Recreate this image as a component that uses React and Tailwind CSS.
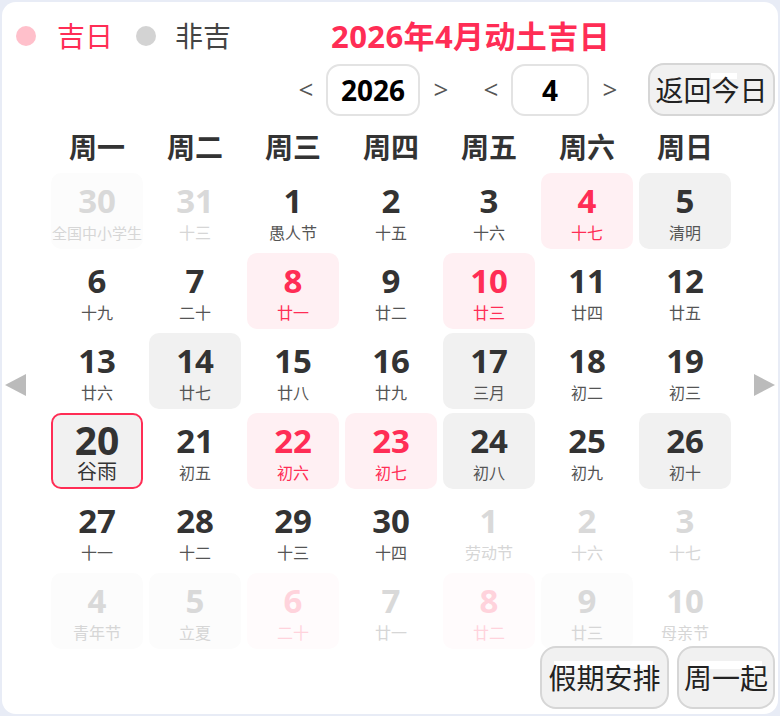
const days = [
  { d: "30", l: "全国中小学生", t: "other", box: "gray", small: true },
  { d: "31", l: "十三", t: "other" },
  { d: "1", l: "愚人节" },
  { d: "2", l: "十五" },
  { d: "3", l: "十六" },
  { d: "4", l: "十七", box: "lucky" },
  { d: "5", l: "清明", box: "gray" },

  { d: "6", l: "十九" },
  { d: "7", l: "二十" },
  { d: "8", l: "廿一", box: "lucky" },
  { d: "9", l: "廿二" },
  { d: "10", l: "廿三", box: "lucky" },
  { d: "11", l: "廿四" },
  { d: "12", l: "廿五" },

  { d: "13", l: "廿六" },
  { d: "14", l: "廿七", box: "gray" },
  { d: "15", l: "廿八" },
  { d: "16", l: "廿九" },
  { d: "17", l: "三月", box: "gray" },
  { d: "18", l: "初二" },
  { d: "19", l: "初三" },

  { d: "20", l: "谷雨", t: "today" },
  { d: "21", l: "初五" },
  { d: "22", l: "初六", box: "lucky" },
  { d: "23", l: "初七", box: "lucky" },
  { d: "24", l: "初八", box: "gray" },
  { d: "25", l: "初九" },
  { d: "26", l: "初十", box: "gray" },

  { d: "27", l: "十一" },
  { d: "28", l: "十二" },
  { d: "29", l: "十三" },
  { d: "30", l: "十四" },
  { d: "1", l: "劳动节", t: "other" },
  { d: "2", l: "十六", t: "other" },
  { d: "3", l: "十七", t: "other" },

  { d: "4", l: "青年节", t: "other", box: "gray" },
  { d: "5", l: "立夏", t: "other", box: "gray" },
  { d: "6", l: "二十", t: "other", box: "lucky" },
  { d: "7", l: "廿一", t: "other" },
  { d: "8", l: "廿二", t: "other", box: "lucky" },
  { d: "9", l: "廿三", t: "other", box: "gray" },
  { d: "10", l: "母亲节", t: "other" },
];

const weekdays = ["周一", "周二", "周三", "周四", "周五", "周六", "周日"];

const font = { fontFamily: '"Open Sans", "Noto Sans CJK SC", sans-serif' };

function cellClass(day) {
  const other = day.t === "other";
  if (day.t === "today")
    return "bg-[#f1f1f1] border-2 border-[#ff2d55] text-[#333]";
  if (day.box === "lucky")
    return other ? "bg-[#fffbfc] text-[#ffd3dc]" : "bg-[#fff0f3] text-[#ff2d55]";
  if (day.box === "gray")
    return other ? "bg-[#fcfcfc] text-[#d9d9d9]" : "bg-[#f1f1f1] text-[#333]";
  return other ? "text-[#d9d9d9]" : "text-[#333]";
}

function lunarClass(day) {
  const other = day.t === "other";
  if (day.box === "lucky") return other ? "text-[#ffd3dc]" : "text-[#ff2d55]";
  return other ? "text-[#d6d6d6]" : "text-[#555]";
}

function Cell({ day }) {
  const today = day.t === "today";
  return (
    <div className={`h-[76px] rounded-[10px] flex flex-col items-center ${cellClass(day)}`}>
      {today ? (
        <>
          <div className="mt-[5px] text-[39px] font-bold leading-[40px]">{day.d}</div>
          <div className="mt-[1px] text-[20px] leading-[22px] whitespace-nowrap">{day.l}</div>
        </>
      ) : (
        <>
          <div className="mt-[10px] text-[33px] font-bold leading-[36px]">{day.d}</div>
          <div
            className={`mt-[4px] leading-[20px] whitespace-nowrap ${day.small ? "text-[15px]" : "text-[16px]"} ${lunarClass(day)}`}
          >
            {day.l}
          </div>
        </>
      )}
    </div>
  );
}

function GrayButton({ children, w, h, strip }) {
  return (
    <button
      className={`${w} ${h} rounded-[16px] bg-[#f1f1f1] border-2 border-[#d6d6d6] text-[28px] text-[#222] flex items-center justify-center`}
    >
      <span className="relative leading-[34px]">
        <span className={`absolute top-0 bg-white ${strip}`}></span>
        <span className="relative">{children}</span>
      </span>
    </button>
  );
}

export default function App() {
  return (
    <div className="w-[780px] h-[716px] bg-[#e8ecf6] p-[2px]" style={font}>
      <div className="relative h-full bg-white rounded-[14px] flex flex-col overflow-hidden">
        {/* LEGEND + TITLE */}
        <div className="flex items-center h-[50px] mt-[9px] pl-[14px]">
          <span className="w-[20px] h-[20px] rounded-full bg-[#ffc0cb]"></span>
          <span className="ml-[21px] text-[28px] text-[#ff2d55]">吉日</span>
          <span className="ml-[23px] w-[20px] h-[20px] rounded-full bg-[#d3d3d3]"></span>
          <span className="ml-[19px] text-[28px] text-[#444]">非吉</span>
          <span className="ml-[100px] text-[31px] font-bold text-[#ff2d55] tracking-[0.4px]">
            2026年4月动土吉日
          </span>
        </div>

        {/* YEAR / MONTH PICKER */}
        <div className="flex items-center justify-end h-[53px] mt-[2px] pr-[3px]">
          <span className="w-[28px] text-center text-[26px] text-[#555]">&lt;</span>
          <div className="ml-[6px] w-[94px] h-[52px] rounded-[14px] border-2 border-[#e3e3e3] bg-white flex items-center justify-center text-[28px] font-bold text-black">
            2026
          </div>
          <span className="ml-[7px] w-[28px] text-center text-[26px] text-[#555]">&gt;</span>
          <span className="ml-[22px] w-[28px] text-center text-[26px] text-[#555]">&lt;</span>
          <div className="ml-[6px] w-[78px] h-[52px] rounded-[14px] border-2 border-[#e3e3e3] bg-white flex items-center justify-center text-[28px] font-bold text-black">
            4
          </div>
          <span className="ml-[7px] w-[28px] text-center text-[26px] text-[#555]">&gt;</span>
          <div className="ml-[24px]">
            <GrayButton w="w-[127px]" h="h-[53px]" strip="left-[56px] w-[26px] h-[6px]">
              返回今日
            </GrayButton>
          </div>
        </div>

        {/* WEEKDAYS */}
        <div className="grid grid-cols-[repeat(7,92px)] gap-x-[6px] pl-[49px] mt-[14px] h-[34px]">
          {weekdays.map((w) => (
            <div key={w} className="text-center text-[28px] font-bold text-[#333] leading-[34px]">
              {w}
            </div>
          ))}
        </div>

        {/* DAYS */}
        <div className="grid grid-cols-[repeat(7,92px)] gap-x-[6px] gap-y-[4px] pl-[49px] mt-[9px]">
          {days.map((day, i) => (
            <Cell key={i} day={day} />
          ))}
        </div>

        {/* side arrows */}
        <div className="absolute left-[3px] top-[372px] w-0 h-0 border-y-[11px] border-y-transparent border-r-[21px] border-r-[#bbbbbb]"></div>
        <div className="absolute right-[3px] top-[372px] w-0 h-0 border-y-[11px] border-y-transparent border-l-[21px] border-l-[#bbbbbb]"></div>

        {/* BOTTOM BUTTONS */}
        <div className="flex justify-end gap-[8px] pr-[3px] mt-[-3px]">
          <GrayButton w="w-[129px]" h="h-[63px]" strip="left-[6px] right-[8px] h-[8px]">
            假期安排
          </GrayButton>
          <GrayButton w="w-[98px]" h="h-[63px]" strip="left-[6px] right-[6px] h-[8px]">
            周一起
          </GrayButton>
        </div>
      </div>
    </div>
  );
}
